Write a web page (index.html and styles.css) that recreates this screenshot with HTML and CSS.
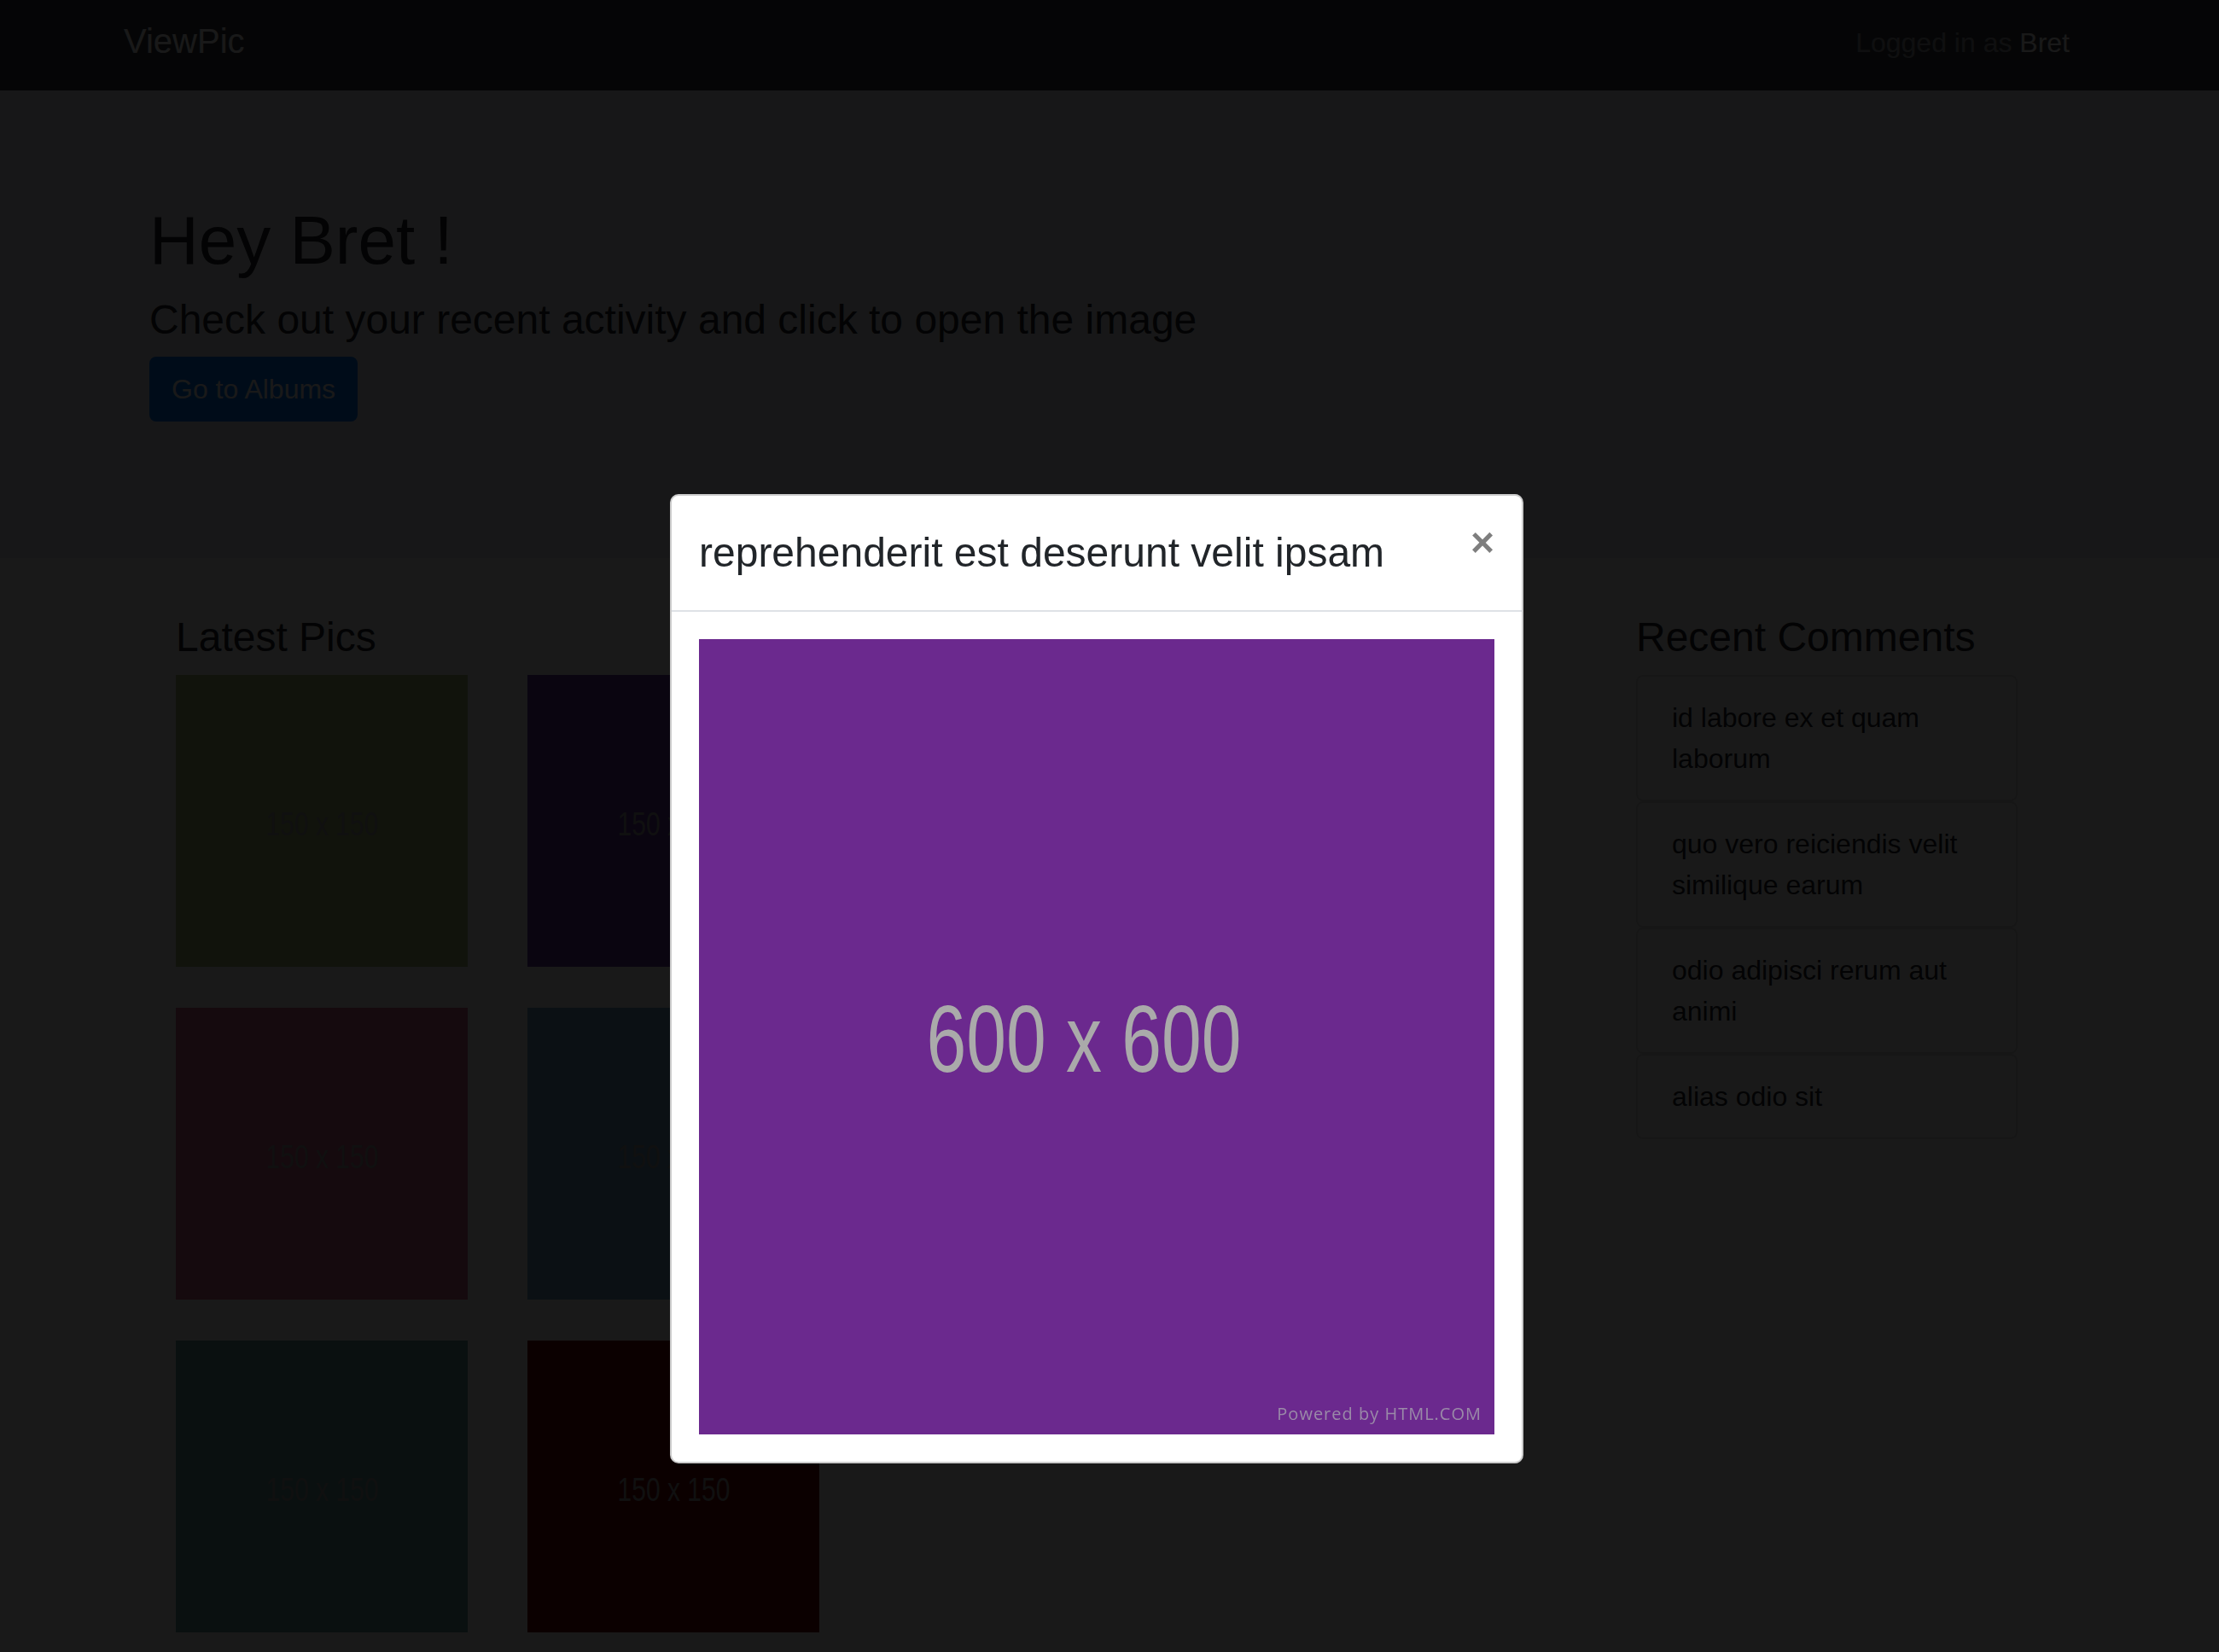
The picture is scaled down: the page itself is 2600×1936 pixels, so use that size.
FILE: index.html
```html
<!DOCTYPE html>
<html lang="en">
<head>
<meta charset="utf-8">
<title>ViewPic</title>
<link rel="stylesheet" href="styles.css">
</head>
<body class="modal-open">
  <nav class="navbar">
    <div class="navbar-inner">
      <a class="brand" href="#">ViewPic</a>
      <span class="navbar-text">Logged in as <a class="user" href="#">Bret</a></span>
    </div>
  </nav>

  <header class="jumbotron">
    <div class="container">
      <h1 class="hero-title">Hey Bret !</h1>
      <h4 class="hero-lead">Check out your recent activity and click to open the image</h4>
      <p class="hero-actions"><a class="btn" href="#">Go to Albums</a></p>
    </div>
  </header>

  <div class="content-wrap">
    <main class="container main">
      <section class="pics">
        <h4 class="section-title">Latest Pics</h4>
        <div class="pic-grid">
          <a class="pic pic-olive" href="#"><span class="ph">150 x 150</span></a>
          <a class="pic pic-violet" href="#"><span class="ph">150 x 150</span></a>
          <a class="pic pic-green" href="#"><span class="ph">150 x 150</span></a>
          <a class="pic pic-rose" href="#"><span class="ph">150 x 150</span></a>
          <a class="pic pic-steel" href="#"><span class="ph">150 x 150</span></a>
          <a class="pic pic-orange" href="#"><span class="ph">150 x 150</span></a>
          <a class="pic pic-teal" href="#"><span class="ph">150 x 150</span></a>
          <a class="pic pic-maroon" href="#"><span class="ph">150 x 150</span></a>
        </div>
      </section>

      <aside class="comments">
        <h4 class="section-title">Recent Comments</h4>
        <ul class="comment-list">
          <li class="comment">id labore ex et quam laborum</li>
          <li class="comment">quo vero reiciendis velit similique earum</li>
          <li class="comment">odio adipisci rerum aut animi</li>
          <li class="comment">alias odio sit</li>
        </ul>
      </aside>
    </main>
  </div>

  <div class="backdrop"></div>

  <div class="modal" role="dialog">
    <div class="modal-dialog">
      <div class="modal-content">
        <div class="modal-header">
          <h4 class="modal-title">reprehenderit est deserunt velit ipsam</h4>
          <button class="close" type="button" aria-label="Close">&times;</button>
        </div>
        <div class="modal-body">
          <div class="big-pic">
            <span class="ph ph-big">600 x 600</span>
            <span class="powered">Powered by HTML.COM</span>
          </div>
        </div>
      </div>
    </div>
  </div>
</body>
</html>
```

FILE: styles.css
```css
* {
  box-sizing: border-box;
}

html,
body {
  margin: 0;
  height: 100%;
}

body {
  font-family: "Liberation Sans", Arial, Helvetica, sans-serif;
  font-size: 32px;
  line-height: 1.5;
  color: #212529;
  background: #ffffff;
  overflow: hidden;
}

/* ---------- navbar ---------- */
.navbar {
  background: #343a40;
  height: 106px;
  padding-right: 30px;
}

.navbar-inner {
  width: 2280px;
  margin: 0 auto;
  display: flex;
  justify-content: space-between;
  align-items: flex-start;
}

.brand {
  font-size: 40px;
  line-height: 60px;
  margin-top: 18px;
  color: #ffffff;
  text-decoration: none;
}

.navbar-text {
  font-size: 32px;
  line-height: 48px;
  margin-top: 26px;
  color: rgba(255, 255, 255, 0.5);
}

.user {
  color: #ffffff;
  text-decoration: none;
}

/* ---------- layout ---------- */
.container {
  width: 2280px;
  margin: 0 auto;
  padding: 0 30px;
}

.jumbotron {
  background: #e9ecef;
  padding: 128px 30px 128px 0;
  margin-bottom: 64px;
}

.hero-title {
  margin: 0 0 16px;
  font-size: 80px;
  line-height: 1.2;
  font-weight: 400;
}

.hero-lead {
  margin: 0 0 14px;
  font-size: 48px;
  line-height: 1.2;
  font-weight: 400;
}

.hero-actions {
  margin: 0 0 32px;
}

.btn {
  display: inline-block;
  font-size: 32px;
  line-height: 48px;
  padding: 12px 24px;
  border: 2px solid #007bff;
  border-radius: 8px;
  background: #007bff;
  color: #ffffff;
  text-decoration: none;
}

.content-wrap {
  padding-right: 30px;
}

.main {
  display: flex;
  justify-content: space-between;
  align-items: flex-start;
  padding: 0 61px;
}

.section-title {
  margin: 0 0 16px;
  font-size: 48px;
  line-height: 1.2;
  font-weight: 400;
}

/* ---------- pictures ---------- */
.pics {
  width: 1166px;
}

.pic-grid {
  display: grid;
  grid-template-columns: repeat(3, 342px);
  gap: 48px 70px;
}

.pic {
  height: 342px;
  display: flex;
  align-items: center;
  justify-content: center;
  text-decoration: none;
}

.ph {
  display: inline-block;
  font-size: 38px;
  line-height: 1;
  color: #a0a0a0;
  transform: scaleX(0.79);
  white-space: nowrap;
  margin-top: 8px;
}

.pic-olive { background: #aabe78; }
.pic-violet { background: #6432a0; }
.pic-green { background: #5a8c46; }
.pic-rose { background: #d2648c; }
.pic-steel { background: #6ea0c8; }
.pic-orange { background: #c8823c; }
.pic-teal { background: #64a0a0; }
.pic-maroon { background: #6e0000; }

/* ---------- comments ---------- */
.comments {
  width: 447px;
}

.comment-list {
  list-style: none;
  margin: 0;
  padding: 0;
}

.comment {
  border: 2px solid rgba(0, 0, 0, 0.125);
  border-radius: 8px;
  padding: 24px 40px;
  font-size: 32px;
  line-height: 48px;
}

/* ---------- modal ---------- */
.backdrop {
  position: fixed;
  inset: 0;
  background: #000000;
  opacity: 0.9;
}

.modal {
  position: fixed;
  inset: 0;
  padding-right: 30px;
}

.modal-dialog {
  width: 1000px;
  margin: 579px auto 0;
}

.modal-content {
  background: #ffffff;
  border: 2px solid rgba(0, 0, 0, 0.2);
  border-radius: 10px;
}

.modal-header {
  display: flex;
  align-items: flex-start;
  justify-content: space-between;
  padding: 31px 32px;
  border-bottom: 2px solid #dee2e6;
}

.modal-title {
  margin: 0;
  font-size: 48px;
  line-height: 72px;
  font-weight: 400;
  color: #212529;
}

.close {
  padding: 32px;
  margin: -32px -32px -32px auto;
  background: transparent;
  border: 0;
  font-family: "Liberation Sans", Arial, sans-serif;
  font-size: 48px;
  font-weight: 700;
  line-height: 1;
  color: #000000;
  opacity: 0.5;
  cursor: pointer;
}

.modal-body {
  padding: 32px;
}

.big-pic {
  position: relative;
  height: 932px;
  background: #6b298e;
  display: flex;
  align-items: center;
  justify-content: center;
}

.ph-big {
  font-size: 112px;
  color: #aaaaaa;
  transform: scaleX(0.75);
  margin: 6px 30px 0 0;
}

.powered {
  position: absolute;
  right: 15px;
  bottom: 14px;
  font-family: "Open Sans", "Liberation Sans", sans-serif;
  font-size: 20px;
  line-height: 1;
  letter-spacing: 1px;
  color: #9a8aa8;
  white-space: nowrap;
}
```
